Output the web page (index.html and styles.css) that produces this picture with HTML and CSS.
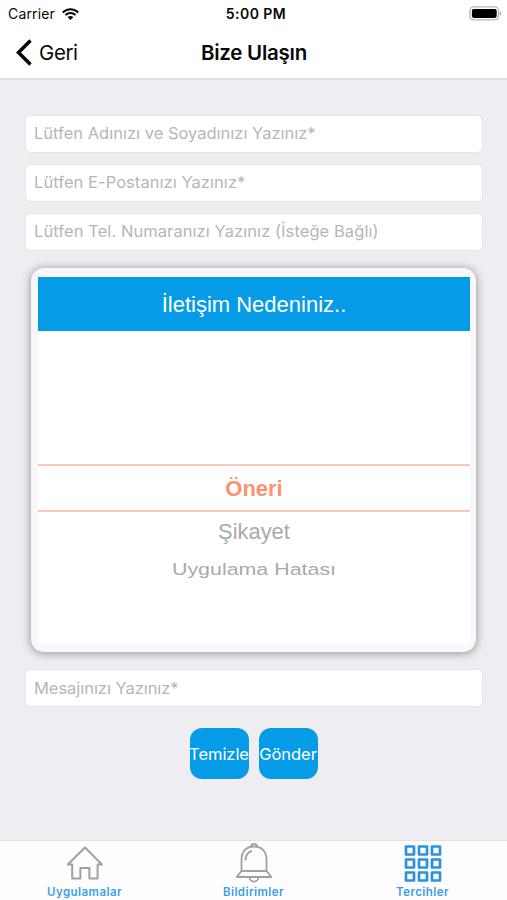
FILE: index.html
```html
<!DOCTYPE html>
<html lang="tr">
<head>
<meta charset="utf-8">
<title>Bize Ulaşın</title>
<link rel="stylesheet" href="styles.css">
</head>
<body>
<div class="status">
  <div class="carrier"><span>Carrier</span>
    <svg class="wifi" width="17" height="12" viewBox="0 0 17 12" fill="none" stroke="#080808" stroke-width="2.1"><path d="M.8 4.4C5.2.1 11.8.1 16.2 4.4M3.5 7.1c2.9-2.8 7.1-2.8 10 0"/><path d="M5.6 9.1c1.8-1.6 4-1.6 5.8 0L8.5 12Z" fill="#080808" stroke="none"/></svg>
  </div>
  <time class="clock">5:00 PM</time>
  <svg class="battery" width="33" height="15" viewBox="0 0 33 15"><rect x=".9" y=".9" width="28.6" height="13" rx="3.8" fill="#fff" stroke="#b9b9b9" stroke-width="1.4"/><rect x="2.9" y="2.9" width="24.8" height="9" rx="1.8"/><path d="M30.8 5.3c2 .8 2 3.4 0 4.2Z" fill="#999"/></svg>
</div>
<header class="nav">
  <div class="back"><svg width="17" height="27" viewBox="0 0 17 27" fill="none" stroke="#050505" stroke-width="3.5"><path d="M15.500 1.500 3.500 13.500l12 12"/></svg><span>Geri</span></div>
  <h1>Bize Ulaşın</h1>
</header>
<main>
  <form class="form">
    <div class="field"><span class="name">Lütfen Adınızı ve Soyadınızı Yazınız*</span></div>
    <div class="field"><span class="mail">Lütfen E-Postanızı Yazınız*</span></div>
    <div class="field"><span class="phone">Lütfen Tel. Numaranızı Yazınız (İsteğe Bağlı)</span></div>
    <section class="picker">
      <h2><span>İletişim Nedeniniz..</span></h2>
      <div class="wheel">
        <div class="option selected"><span>Öneri</span></div>
        <div class="option next"><span>Şikayet</span></div>
        <div class="option last"><span>Uygulama Hatası</span></div>
      </div>
    </section>
    <div class="field message"><span>Mesajınızı Yazınız*</span></div>
    <div class="actions"><div class="button"><span>Temizle</span></div><div class="button"><span>Gönder</span></div></div>
  </form>
</main>
<nav class="tabs">
  <div class="tab"><svg width="40" height="40" viewBox="0 0 40 40" fill="none" stroke="#a0a0a0" stroke-width="2" stroke-linejoin="round"><path d="M20 4.500 2.800 21.500h4.400v14h8.200V25h9v10.500h8.200v-14H37Z"/></svg><span>Uygulamalar</span></div>
  <div class="tab"><svg width="40" height="40" viewBox="0 0 40 40" fill="none" stroke="#a0a0a0" stroke-width="1.8" stroke-linejoin="round"><path d="M16.800 3.400a3.300 3.300 0 0 1 6.400 0M7.500 28V16.500C7.500 8 12.600 3.500 20 3.500S32.500 8 32.500 16.500V28M7.500 28h25M7.500 28l-4.800 6h34.600l-4.800-6M15.500 34c.7 6.200 8.300 6.200 9 0M11.500 17.500c0-5.500 2.500-8.500 6.500-9.700"/></svg><span>Bildirimler</span></div>
  <div class="tab"><svg width="40" height="40" viewBox="0 0 40 40" fill="none" stroke="#2c92dc" stroke-width="2.700" stroke-linejoin="round"><path d="M3 3.500h8v8H3zM16 3.500h8v8h-8zM29 3.500h8v8h-8zM3 16.500h8v8H3zM16 16.500h8v8h-8zM29 16.500h8v8h-8zM3 29.500h8v8H3zM16 29.500h8v8h-8zM29 29.500h8v8h-8z"/></svg><span>Tercihler</span></div>
</nav>
</body>
</html>
```
FILE: styles.css
```css
* { box-sizing: border-box; }
body {
  margin: 0;
  height: 900px;
  display: flex;
  flex-direction: column;
  overflow: hidden;
  background: #eeedf2;
  font-family: Inter, "Liberation Sans", sans-serif;
  color: #080808;
}
span { white-space: nowrap; }
.status {
  height: 27px;
  padding: 0 5px 0 8px;
  display: grid;
  grid-template-columns: 1fr auto 1fr;
  align-items: center;
  background: #fff;
  font-size: 14px;
}
.carrier { display: flex; align-items: center; gap: 7px; }
.carrier span { letter-spacing: .15px; }
.clock { font-weight: 600; font-size: 14px; letter-spacing: .45px; margin-left: 2px; }
.battery { justify-self: end; }
.nav {
  height: 53px;
  display: grid;
  grid-template-columns: 1fr auto 1fr;
  align-items: center;
  padding: 0 0 1px 15px;
  background: #fff;
  border-bottom: 2px solid #dedee1;
}
.back { display: flex; align-items: center; gap: 7px; font-size: 20.5px; letter-spacing: -.4px; }
.nav h1 { margin: 0 14px 0 0; font-size: 20.5px; font-weight: 600; letter-spacing: -.25px; }
main { flex: 1; padding: 35px 24px 0 25px; }
.form { display: flex; flex-direction: column; gap: 12px; }
.field {
  height: 38px;
  padding: 0 9px 2px 8px;
  display: flex;
  align-items: center;
  border: 1px solid #e6e5ea;
  border-radius: 6px;
  background: #fff;
  color: #b6b6b8;
  font-size: 16.5px;
}
.field + .field { margin-top: -1px; }
.mail { letter-spacing: .05px; }
.phone { letter-spacing: .07px; }
.message { padding-bottom: 1px; letter-spacing: -.05px; }
.picker {
  height: 384px;
  margin: 5px 7px 5px 6px;
  padding: 9px 6px 8px 7px;
  border-radius: 13px;
  background: #f8f8fb;
  box-shadow: 0 1px 8px 1px rgba(0, 0, 0, .34);
  font-family: "Liberation Sans", sans-serif;
}
.picker h2 {
  height: 54px;
  margin: 0;
  padding-top: 2px;
  display: flex;
  align-items: center;
  justify-content: center;
  background: #059be6;
  color: #fff;
  font-size: 22px;
  font-weight: 400;
}
.wheel { height: 313px; padding-top: 133px; background: #fff; color: #aaa; }
.option { display: flex; align-items: center; justify-content: center; }
.selected {
  height: 48px;
  padding-top: 2px;
  border-top: 2px solid #fdc6b7;
  border-bottom: 2px solid #fdc6b7;
  color: #fc9270;
  font-size: 22px;
  font-weight: 700;
}
.next { height: 40px; font-size: 21.9px; }
.last { height: 36px; font-size: 21.4px; }
.last span { transform: scaleY(.76); }
.actions { display: flex; justify-content: center; gap: 10px; margin-top: 9px; padding-right: 1px; }
.button {
  width: 59px;
  height: 51px;
  display: flex;
  align-items: center;
  justify-content: center;
  border-radius: 12px;
  background: #059be6;
  color: #fff;
  font-size: 16.5px;
  letter-spacing: -.05px;
}
.tabs {
  height: 60px;
  display: grid;
  grid-template-columns: repeat(3, 1fr);
  border-top: 1px solid #e2e2e5;
  background: #fdfdfd;
}
.tab {
  display: flex;
  flex-direction: column;
  align-items: center;
  padding-top: 2px;
  color: #3c9eec;
  font-size: 11.5px;
  font-weight: 600;
  line-height: 18px;
}
.tab span { letter-spacing: .45px; }
.tab svg { flex: none; }
```
